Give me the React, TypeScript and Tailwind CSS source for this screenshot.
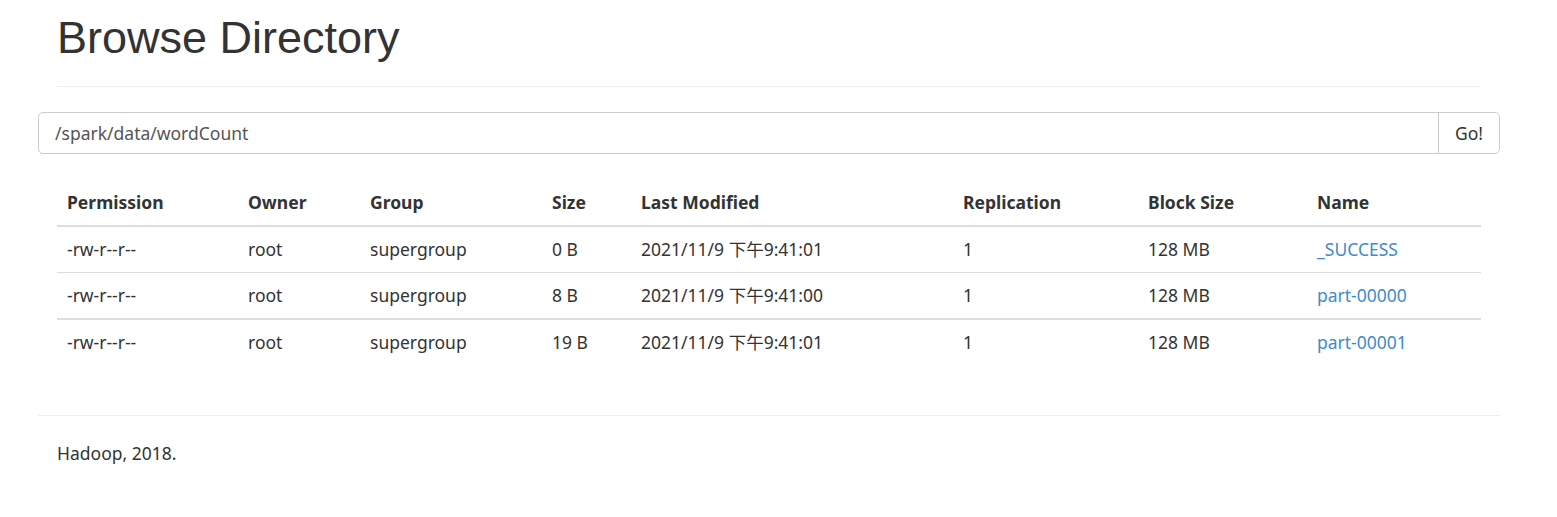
import React from 'react'

interface FileRow {
  permission: string
  owner: string
  group: string
  size: string
  modified: string
  replication: string
  blockSize: string
  name: string
}

const rows: FileRow[] = [
  { permission: '-rw-r--r--', owner: 'root', group: 'supergroup', size: '0 B', modified: '2021/11/9 下午9:41:01', replication: '1', blockSize: '128 MB', name: '_SUCCESS' },
  { permission: '-rw-r--r--', owner: 'root', group: 'supergroup', size: '8 B', modified: '2021/11/9 下午9:41:00', replication: '1', blockSize: '128 MB', name: 'part-00000' },
  { permission: '-rw-r--r--', owner: 'root', group: 'supergroup', size: '19 B', modified: '2021/11/9 下午9:41:01', replication: '1', blockSize: '128 MB', name: 'part-00001' },
]

const bodyFont = "font-['Noto_Sans','Noto_Sans_CJK_SC',sans-serif]"

const App: React.FC = () => {
  return (
    <div className={`min-h-[517px] bg-white text-[#333] ${bodyFont} text-[17.5px] leading-[25px]`}>
      <div className="ml-[38px] w-[1462px]">
        {/* header */}
        <div className="mx-[19px] pt-[13px] pb-[23px] border-b border-[#eee]">
          <h1 className="font-['Liberation_Sans',Arial,sans-serif] text-[45px] leading-[49.5px] font-normal">
            Browse Directory
          </h1>
        </div>

        {/* path input */}
        <div className="mt-[25px] flex h-[42px] border border-[#ccc] rounded-[5px]">
          <input
            className="flex-1 px-[16px] pt-[1px] outline-none bg-transparent text-[#555]"
            defaultValue="/spark/data/wordCount"
          />
          <button className="w-[61px] pt-[1px] border-l border-[#ccc] text-[#333] text-center">Go!</button>
        </div>

        {/* listing */}
        <div className="mx-[19px] mt-[25px]">
          <table className="w-full table-fixed border-collapse">
            <thead>
              <tr className="border-b-2 border-[#ddd]">
                <th className="w-[181px] p-[10px] pt-[11px] text-left font-bold">Permission</th>
                <th className="w-[122px] p-[10px] pt-[11px] text-left font-bold">Owner</th>
                <th className="w-[182px] p-[10px] pt-[11px] text-left font-bold">Group</th>
                <th className="w-[89px] p-[10px] pt-[11px] text-left font-bold">Size</th>
                <th className="w-[322px] p-[10px] pt-[11px] text-left font-bold">Last Modified</th>
                <th className="w-[185px] p-[10px] pt-[11px] text-left font-bold">Replication</th>
                <th className="w-[169px] p-[10px] pt-[11px] text-left font-bold">Block Size</th>
                <th className="p-[10px] pt-[11px] text-left font-bold">Name</th>
              </tr>
            </thead>
            <tbody>
              {rows.map((r, i) => (
                <tr key={r.name} className={i === 0 ? '' : i === 1 ? 'border-t border-[#ddd]' : 'border-t-2 border-[#ddd]'}>
                  <td className="p-[10px]">{r.permission}</td>
                  <td className="p-[10px]">{r.owner}</td>
                  <td className="p-[10px]">{r.group}</td>
                  <td className="p-[10px]">{r.size}</td>
                  <td className="p-[10px]">{r.modified}</td>
                  <td className="p-[10px]">{r.replication}</td>
                  <td className="p-[10px]">{r.blockSize}</td>
                  <td className="p-[10px]">
                    <a href="#" className="text-[#3e8bd0]">{r.name}</a>
                  </td>
                </tr>
              ))}
            </tbody>
          </table>
        </div>

        {/* footer */}
        <div className="mt-[50px] border-t border-[#eee] pt-[25px] px-[19px]">
          <p>Hadoop, 2018.</p>
        </div>
      </div>
    </div>
  )
}

export default App
